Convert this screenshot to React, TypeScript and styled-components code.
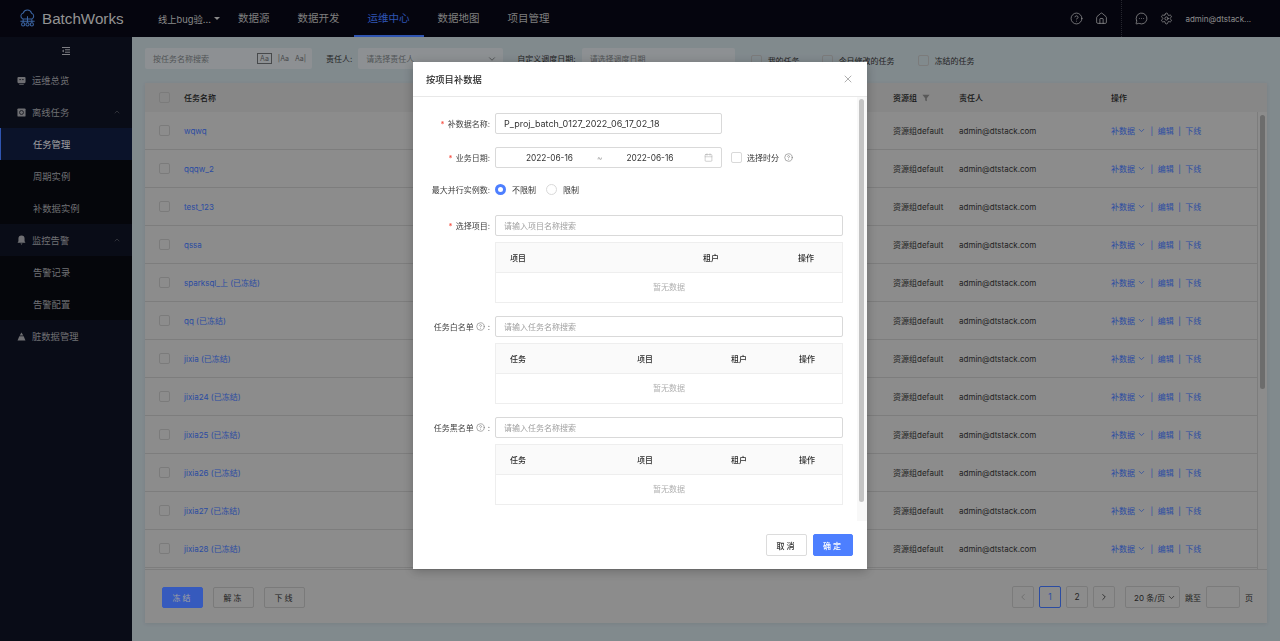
import React from 'react';
import styled, { createGlobalStyle } from 'styled-components';
import { ChevronDown, ChevronLeft, ChevronRight, ChevronUp, CircleHelp, Calendar, House, MessageCircleMore, Settings, X } from 'lucide-react';

const fontStack = `Inter, "Noto Sans CJK SC", sans-serif`;

const GlobalStyle = createGlobalStyle`
    * {
        box-sizing: border-box;
    }
    html, body {
        margin: 0;
        height: 100%;
        overflow: hidden;
        font-family: ${fontStack};
        font-size: 8px;
    }
`;

const LogoIcon = () => (
    <svg width='19' height='19' viewBox='0 0 24 24' fill='none' stroke='#4f86d8' strokeWidth='1.3'>
        <path d='M6 12.5a4 4 0 0 1 .6-7.5 5.6 5.6 0 0 1 10.6 0.4 3.8 3.8 0 0 1 .4 7.1z' />
        <path d='M3 15.5h18M6.5 13v4M12 9v8M17.5 13v4' />
        <circle cx='6.5' cy='19.5' r='2' />
        <circle cx='12' cy='19.5' r='2' />
        <circle cx='17.5' cy='19.5' r='2' />
    </svg>
);

const MenuToggleIcon = () => (
    <svg width='10' height='10' viewBox='0 0 10 10' fill='none' stroke='#a9aab0' strokeWidth='1'>
        <path d='M1 1.5h8M4 3.8h5M4 6.2h5M1 8.5h8' />
        <path d='M2.8 3.4 1 5l1.8 1.6z' fill='#a9aab0' stroke='none' />
    </svg>
);

const OverviewIcon = () => (
    <svg width='9' height='9' viewBox='0 0 10 10'>
        <rect x='0.5' y='1' width='9' height='7' rx='1.2' fill='#94959a' />
        <path d='M2.5 9.4h5' stroke='#94959a' strokeWidth='0.8' />
        <path d='M2.5 4h2M5.5 4h2' stroke='#1a1c28' strokeWidth='0.9' />
    </svg>
);

const OfflineIcon = () => (
    <svg width='9' height='9' viewBox='0 0 10 10'>
        <rect x='0.5' y='0.5' width='9' height='9' rx='1' fill='#94959a' />
        <circle cx='5' cy='5' r='2.2' fill='none' stroke='#1a1c28' strokeWidth='0.9' />
    </svg>
);

const BellIcon = () => (
    <svg width='9' height='10' viewBox='0 0 10 11' fill='#94959a'>
        <path d='M5 0.5a3.4 3.4 0 0 0-3.4 3.4V7L.6 8.6h8.8L8.4 7V3.9A3.4 3.4 0 0 0 5 .5z' />
        <path d='M3.8 9.4h2.4L5 10.8z' />
    </svg>
);

const DirtyIcon = () => (
    <svg width='9' height='9' viewBox='0 0 10 10' fill='#94959a'>
        <path d='M5 0.5 7 4H3z' />
        <path d='M2.6 4.6h4.8L9.4 9.5H.6z' />
    </svg>
);

const FilterIcon = () => (
    <svg width='8' height='8' viewBox='0 0 10 10' fill='#777'>
        <path d='M.5 1h9L6 5.4V9L4 8V5.4z' />
    </svg>
);

const HelpIcon = () => <CircleHelp size={9} strokeWidth={1.6} />;

const Header = styled.header`
    flex: none;
    height: 37px;
    display: flex;
    align-items: stretch;
    background: #070713;
    color: #b8b8b8;
`;

const Brand = styled.div`
    display: flex;
    align-items: center;
    width: 158px;
    padding-left: 18px;
    gap: 5px;
    font-family: "Liberation Sans", sans-serif;
    font-size: 15.2px;
    color: #c4c4c4;
`;

const ProjectPicker = styled.div`
    display: flex;
    align-items: center;
    width: 66px;
    gap: 3px;
    font-size: 9.3px;
`;

const Caret = styled.span`
    width: 0;
    height: 0;
    border-left: 3px solid transparent;
    border-right: 3px solid transparent;
    border-top: 3.5px solid #b8b8b8;
`;

const NavItem = styled.div<{ $active?: boolean }>`
    display: flex;
    align-items: center;
    padding: 0 14px;
    font-size: 10.5px;
    color: ${p => (p.$active ? '#3f71eb' : '#a8a8a8')};
    border-bottom: 2px solid ${p => (p.$active ? '#3f71eb' : 'transparent')};
`;

const HeaderRight = styled.div`
    margin-left: auto;
    display: flex;
    align-items: center;
    padding-right: 29px;
    color: #d0d0d0;
`;

const IconGroup = styled.div`
    display: flex;
    align-items: center;
    gap: 12px;
    padding-right: 13px;
`;

const UserGroup = styled(IconGroup)`
    height: 100%;
    padding: 0 0 0 13px;
    border-left: 1px dotted #33343f;
`;

const UserName = styled.span`
    font-size: 8px;
    color: #bdbdbd;
`;

const Shell = styled.div`
    width: 1280px;
    height: 641px;
    display: flex;
    flex-direction: column;
    overflow: hidden;
`;

const Body = styled.div`
    flex: 1;
    display: flex;
    min-height: 0;
`;

const Sidebar = styled.aside`
    flex: none;
    width: 132px;
    background: #0d101f;
    color: #94959a;
    font-size: 9.3px;
`;

const ToggleRow = styled.div`
    height: 27px;
    display: flex;
    align-items: center;
    justify-content: center;
`;

const MenuItem = styled.div`
    height: 32px;
    display: flex;
    align-items: center;
    padding-left: 17px;
    gap: 6px;
`;

const ItemChevron = styled.span`
    margin-left: auto;
    padding-right: 11px;
    display: flex;
    opacity: 0.55;
`;

const SubMenu = styled.div`
    background: #07080f;
`;

const SubItem = styled.div<{ $active?: boolean }>`
    height: 32px;
    display: flex;
    align-items: center;
    padding-left: ${p => (p.$active ? 32 : 33)}px;
    color: ${p => (p.$active ? '#d8d8d8' : '#94959a')};
    background: ${p => (p.$active ? '#0f1a38' : 'transparent')};
    border-left: ${p => (p.$active ? '1px solid #3f71eb' : 'none')};
`;

const Main = styled.main`
    flex: 1;
    min-width: 0;
    background: #adb8bd;
    padding: 11px 13px 18px;
    display: flex;
    flex-direction: column;
    color: #2e2e2e;
`;

const FilterBar = styled.div`
    flex: none;
    height: 21px;
    display: flex;
    align-items: center;
    margin-bottom: 14px;
    font-size: 8px;
`;

const FilterInput = styled.div<{ $width: number }>`
    width: ${p => p.$width}px;
    height: 21px;
    flex: none;
    display: flex;
    align-items: center;
    padding: 0 6px 0 8px;
    background: #bcc1c4;
    border-radius: 2px;
    color: #6c7073;
`;

const MatchIcons = styled.span`
    margin-left: auto;
    display: flex;
    align-items: center;
    gap: 6px;
    font-size: 7px;
    color: #5f6264;
`;

const MatchBox = styled.span`
    border: 0.5px solid #5f6264;
    padding: 0 2px;
`;

const FilterLabel = styled.span<{ $left: number; $right: number }>`
    margin: 0 ${p => p.$right}px 0 ${p => p.$left}px;
    white-space: nowrap;
`;

const Box = styled.span<{ $dark?: boolean }>`
    flex: none;
    width: 11px;
    height: 11px;
    border: 1px solid ${p => (p.$dark ? '#a5a5a5' : '#d9d9d9')};
    border-radius: 2px;
`;

const FilterCheck = styled.span<{ $left: number }>`
    display: flex;
    align-items: center;
    gap: 6px;
    margin: 3px 0 0 ${p => p.$left}px;
    white-space: nowrap;
`;

const Panel = styled.section`
    flex: 1;
    min-height: 0;
    display: flex;
    flex-direction: column;
    background: #bbb;
    box-shadow: 0 1px 4px rgba(0, 0, 0, 0.08);
`;

const Columns = styled.div`
    flex: none;
    display: grid;
    grid-template-columns: 39px 709px 66px 152px 1fr;
    align-items: center;
`;

const HeadRow = styled(Columns)`
    height: 29px;
    background: #b4b4b4;
    font-weight: 500;
    color: #222;
`;

const HeadCheck = styled.span`
    padding-left: 14px;
    display: flex;
`;

const ResourceHead = styled.span`
    display: flex;
    align-items: center;
    gap: 5px;
`;

const TableBody = styled.div`
    flex: 1;
    min-height: 0;
    display: flex;
    overflow: hidden;
`;

const RowList = styled.div`
    flex: 1;
    min-width: 0;
`;

const TableRow = styled(Columns)`
    height: 38px;
    border-bottom: 1px solid #a7a7a7;
`;

const NameLink = styled.a`
    color: #3a66d8;
`;

const ActionCell = styled.div`
    display: flex;
    align-items: center;
    color: #3a66d8;
`;

const Divider = styled.span`
    margin: 0 4.5px;
`;

const ScrollTrack = styled.div`
    flex: none;
    width: 10px;
    border-left: 1px solid #a7a7a7;
    padding: 3px 2px 0;
`;

const ScrollThumb = styled.div<{ $height: number; $color?: string }>`
    height: ${p => p.$height}px;
    border-radius: 3px;
    background: ${p => p.$color || '#909090'};
`;

const Footer = styled.div`
    flex: none;
    height: 53px;
    display: flex;
    align-items: center;
    padding: 1px 14px 0 17px;
    box-shadow: 0 -1px 0 #a7a7a7;
`;

const Btn = styled.button<{ $primary?: boolean }>`
    height: 21px;
    padding: 0;
    width: 41px;
    margin-right: 10px;
    font: inherit;
    letter-spacing: 2px;
    color: ${p => (p.$primary ? '#d5d5d5' : '#2e2e2e')};
    background: ${p => (p.$primary ? '#4978fd' : 'transparent')};
    border: 1px solid ${p => (p.$primary ? '#4978fd' : '#a3a3a3')};
    border-radius: 2px;
`;

const Pager = styled.div`
    margin-left: auto;
    display: flex;
    align-items: center;
    gap: 5px;
`;

const PageBtn = styled.span<{ $active?: boolean; $muted?: boolean }>`
    width: 22px;
    height: 22px;
    display: flex;
    align-items: center;
    justify-content: center;
    font-size: 8.4px;
    border: 1px solid ${p => (p.$active ? '#3a66d8' : '#a5a5a5')};
    border-radius: 2px;
    color: ${p => (p.$active ? '#3a66d8' : p.$muted ? '#8f8f8f' : '#2e2e2e')};
`;

const PageSize = styled.span`
    width: 55px;
    height: 22px;
    margin-left: 5px;
    display: flex;
    align-items: center;
    justify-content: space-between;
    padding: 0 3px 0 8px;
    border: 1px solid #a5a5a5;
    border-radius: 2px;
    white-space: nowrap;
`;

const JumpInput = styled.span`
    width: 34px;
    height: 22px;
    border: 1px solid #a5a5a5;
    border-radius: 2px;
`;

const Overlay = styled.div`
    position: fixed;
    inset: 0;
    background: rgba(0, 0, 0, 0.25);
    display: flex;
    justify-content: center;
    align-items: flex-start;
    padding-top: 62px;
`;

const Modal = styled.div`
    width: 454px;
    height: 507px;
    display: flex;
    flex-direction: column;
    background: #fff;
    color: #333;
    box-shadow: 0 2px 10px rgba(0, 0, 0, 0.25);
`;

const ModalHead = styled.div`
    flex: none;
    height: 35px;
    display: flex;
    align-items: center;
    justify-content: space-between;
    padding: 0 13px;
    font-size: 9.3px;
    font-weight: 500;
    color: #2b2b2b;
    border-bottom: 1px solid #e8e8e8;
`;

const ModalMiddle = styled.div`
    flex: 1;
    min-height: 0;
    display: flex;
`;

const FormArea = styled.div`
    flex: 1;
    min-width: 0;
    padding: 16px 14px 0 0;
    overflow: hidden;
`;

const ModalScrollTrack = styled.div`
    flex: none;
    width: 10px;
    padding: 2px 3px 0 2px;
    background: #f8f8f8;
`;

const FormRow = styled.div<{ $gap: number; $start?: boolean }>`
    display: flex;
    align-items: ${p => (p.$start ? 'flex-start' : 'center')};
    margin-bottom: ${p => p.$gap}px;
`;

const Label = styled.div`
    flex: none;
    width: 82px;
    height: 21px;
    padding-right: 5px;
    display: flex;
    align-items: center;
    justify-content: flex-end;
    gap: 2.5px;
    white-space: nowrap;
    color: #404040;
`;

const Required = styled.span`
    color: #f5483b;
    margin-right: 1px;
`;

const Control = styled.div<{ $width?: number }>`
    width: ${p => (p.$width ? `${p.$width}px` : '100%')};
    flex: ${p => (p.$width ? 'none' : '1')};
    min-width: 0;
`;

const TextInput = styled.div<{ $placeholder?: boolean }>`
    height: 21px;
    display: flex;
    align-items: center;
    padding: 0 8px;
    border: 1px solid #d9d9d9;
    border-radius: 2px;
    font-size: ${p => (p.$placeholder ? 8 : 9)}px;
    color: ${p => (p.$placeholder ? '#a0a0a0' : '#333')};
    white-space: nowrap;
`;

const DateRange = styled(TextInput)`
    padding: 0 8px 0 30px;
    font-size: 8.3px;
    color: #a9a9a9;
`;

const DateValue = styled.span`
    color: #333;
`;

const DateTilde = styled.span`
    margin: 0 24px;
`;

const DateIcon = styled.span`
    margin-left: auto;
    display: flex;
`;

const SideCheck = styled.div`
    margin-left: 9px;
    display: flex;
    align-items: center;
    gap: 5px;
`;

const HelpMark = styled.span`
    display: flex;
    color: #777;
`;

const RadioRow = styled.div`
    height: 21px;
    display: flex;
    align-items: center;
`;

const Radio = styled.span<{ $on?: boolean }>`
    width: 11px;
    height: 11px;
    flex: none;
    border-radius: 50%;
    background: #fff;
    border: ${p => (p.$on ? '3px solid #4d7fff' : '1px solid #d9d9d9')};
    box-shadow: ${p => (p.$on ? 'inset 0 0 0 1px #fff' : 'none')};
`;

const RadioText = styled.span`
    margin: 0 10px 0 6px;
`;

const MiniTable = styled.div`
    margin-top: 6px;
    border: 1px solid #eeeeee;
`;

const MiniHead = styled.div<{ $cols: string }>`
    height: 30px;
    padding: 0 0 1px 14px;
    display: grid;
    grid-template-columns: ${p => p.$cols};
    align-items: center;
    background: #fafafa;
    border-bottom: 1px solid #eeeeee;
    font-weight: 500;
    color: #2b2b2b;
`;

const EmptyRow = styled.div`
    height: 29px;
    padding-bottom: 2px;
    display: flex;
    align-items: center;
    justify-content: center;
    color: #b0b0b0;
`;

const ModalFoot = styled.div`
    flex: none;
    height: 48px;
    display: flex;
    align-items: center;
    justify-content: flex-end;
    gap: 6px;
    padding: 0 14px 0 0;
`;

const ModalBtn = styled.button<{ $primary?: boolean }>`
    width: ${p => (p.$primary ? 40 : 41)}px;
    height: 22px;
    padding: 0;
    font: inherit;
    font-weight: 500;
    letter-spacing: 2px;
    border-radius: 2px;
    color: ${p => (p.$primary ? '#fff' : '#333')};
    background: ${p => (p.$primary ? '#4d7fff' : '#fff')};
    border: 1px solid ${p => (p.$primary ? '#4d7fff' : '#dcdcdc')};
`;

const rows = [
    'wqwq',
    'qqqw_2',
    'test_123',
    'qssa',
    'sparksql_上 (已冻结)',
    'qq (已冻结)',
    'jixia (已冻结)',
    'jixia24 (已冻结)',
    'jixia25 (已冻结)',
    'jixia26 (已冻结)',
    'jixia27 (已冻结)',
    'jixia28 (已冻结)',
];

const taskCols = '127px 94px 68px 1fr';

const App = () => {
    return (
        <Shell>
            <GlobalStyle />
            <Header>
                <Brand>
                    <LogoIcon />
                    <span>BatchWorks</span>
                </Brand>
                <ProjectPicker>
                    <span>线上bug验...</span>
                    <Caret />
                </ProjectPicker>
                <NavItem>数据源</NavItem>
                <NavItem>数据开发</NavItem>
                <NavItem $active>运维中心</NavItem>
                <NavItem>数据地图</NavItem>
                <NavItem>项目管理</NavItem>
                <HeaderRight>
                    <IconGroup>
                        <CircleHelp size={13} strokeWidth={1.3} />
                        <House size={13} strokeWidth={1.3} />
                    </IconGroup>
                    <UserGroup>
                        <MessageCircleMore size={13} strokeWidth={1.3} />
                        <Settings size={13} strokeWidth={1.3} />
                        <UserName>admin@dtstack...</UserName>
                    </UserGroup>
                </HeaderRight>
            </Header>
            <Body>
                <Sidebar>
                    <ToggleRow>
                        <MenuToggleIcon />
                    </ToggleRow>
                    <MenuItem>
                        <OverviewIcon />
                        运维总览
                    </MenuItem>
                    <MenuItem>
                        <OfflineIcon />
                        离线任务
                        <ItemChevron>
                            <ChevronUp size={8} />
                        </ItemChevron>
                    </MenuItem>
                    <SubMenu>
                        <SubItem $active>任务管理</SubItem>
                        <SubItem>周期实例</SubItem>
                        <SubItem>补数据实例</SubItem>
                    </SubMenu>
                    <MenuItem>
                        <BellIcon />
                        监控告警
                        <ItemChevron>
                            <ChevronUp size={8} />
                        </ItemChevron>
                    </MenuItem>
                    <SubMenu>
                        <SubItem>告警记录</SubItem>
                        <SubItem>告警配置</SubItem>
                    </SubMenu>
                    <MenuItem>
                        <DirtyIcon />
                        脏数据管理
                    </MenuItem>
                </Sidebar>
                <Main>
                    <FilterBar>
                        <FilterInput $width={167}>
                            按任务名称搜索
                            <MatchIcons>
                                <MatchBox>Aa</MatchBox>
                                <span>|Aa</span>
                                <span>Aa|</span>
                            </MatchIcons>
                        </FilterInput>
                        <FilterLabel $left={14} $right={6}>责任人:</FilterLabel>
                        <FilterInput $width={145}>
                            请选择责任人
                            <MatchIcons>
                                <ChevronDown size={10} />
                            </MatchIcons>
                        </FilterInput>
                        <FilterLabel $left={14} $right={6}>自定义调度日期:</FilterLabel>
                        <FilterInput $width={153}>请选择调度日期</FilterInput>
                        <FilterCheck $left={16}><Box $dark />我的任务</FilterCheck>
                        <FilterCheck $left={22}><Box $dark />今日修改的任务</FilterCheck>
                        <FilterCheck $left={23}><Box $dark />冻结的任务</FilterCheck>
                    </FilterBar>
                    <Panel>
                        <HeadRow>
                            <HeadCheck><Box $dark /></HeadCheck>
                            <span>任务名称</span>
                            <ResourceHead>资源组<FilterIcon /></ResourceHead>
                            <span>责任人</span>
                            <span>操作</span>
                        </HeadRow>
                        <TableBody>
                            <RowList>
                                {rows.map(name => (
                                    <TableRow key={name}>
                                        <HeadCheck><Box $dark /></HeadCheck>
                                        <NameLink>{name}</NameLink>
                                        <span>资源组default</span>
                                        <span>admin@dtstack.com</span>
                                        <ActionCell>
                                            补数据<ChevronDown size={9} style={{ marginLeft: 2 }} />
                                            <Divider>|</Divider>编辑<Divider>|</Divider>下线
                                        </ActionCell>
                                    </TableRow>
                                ))}
                            </RowList>
                            <ScrollTrack>
                                <ScrollThumb $height={274} />
                            </ScrollTrack>
                        </TableBody>
                        <Footer>
                            <Btn $primary>冻结</Btn>
                            <Btn>解冻</Btn>
                            <Btn>下线</Btn>
                            <Pager>
                                <PageBtn $muted><ChevronLeft size={10} /></PageBtn>
                                <PageBtn $active>1</PageBtn>
                                <PageBtn>2</PageBtn>
                                <PageBtn><ChevronRight size={10} /></PageBtn>
                                <PageSize>20 条/页<ChevronDown size={9} /></PageSize>
                                <span>跳至</span>
                                <JumpInput />
                                <span>页</span>
                            </Pager>
                        </Footer>
                    </Panel>
                </Main>
            </Body>
            <Overlay>
                <Modal>
                    <ModalHead>
                        按项目补数据
                        <X size={12} color='#8c8c8c' strokeWidth={1.4} />
                    </ModalHead>
                    <ModalMiddle>
                        <FormArea>
                            <FormRow $gap={13}>
                                <Label><span><Required>*</Required> 补数据名称:</span></Label>
                                <Control $width={227}>
                                    <TextInput>P_proj_batch_0127_2022_06_17_02_18</TextInput>
                                </Control>
                            </FormRow>
                            <FormRow $gap={11}>
                                <Label><span><Required>*</Required> 业务日期:</span></Label>
                                <Control $width={227}>
                                    <DateRange>
                                        <DateValue>2022-06-16</DateValue>
                                        <DateTilde>~</DateTilde>
                                        <DateValue>2022-06-16</DateValue>
                                        <DateIcon><Calendar size={9} strokeWidth={1.4} /></DateIcon>
                                    </DateRange>
                                </Control>
                                <SideCheck>
                                    <Box />
                                    选择时分
                                    <HelpMark><HelpIcon /></HelpMark>
                                </SideCheck>
                            </FormRow>
                            <FormRow $gap={15}>
                                <Label>最大并行实例数:</Label>
                                <Control>
                                    <RadioRow>
                                        <Radio $on />
                                        <RadioText>不限制</RadioText>
                                        <Radio />
                                        <RadioText>限制</RadioText>
                                    </RadioRow>
                                </Control>
                            </FormRow>
                            <FormRow $gap={13} $start>
                                <Label><span><Required>*</Required> 选择项目:</span></Label>
                                <Control>
                                    <TextInput $placeholder>请输入项目名称搜索</TextInput>
                                    <MiniTable>
                                        <MiniHead $cols='193px 95px 1fr'>
                                            <span>项目</span><span>租户</span><span>操作</span>
                                        </MiniHead>
                                        <EmptyRow>暂无数据</EmptyRow>
                                    </MiniTable>
                                </Control>
                            </FormRow>
                            <FormRow $gap={13} $start>
                                <Label>任务白名单<HelpMark><HelpIcon /></HelpMark><span>:</span></Label>
                                <Control>
                                    <TextInput $placeholder>请输入任务名称搜索</TextInput>
                                    <MiniTable>
                                        <MiniHead $cols={taskCols}>
                                            <span>任务</span><span>项目</span><span>租户</span><span>操作</span>
                                        </MiniHead>
                                        <EmptyRow>暂无数据</EmptyRow>
                                    </MiniTable>
                                </Control>
                            </FormRow>
                            <FormRow $gap={14} $start>
                                <Label>任务黑名单<HelpMark><HelpIcon /></HelpMark><span>:</span></Label>
                                <Control>
                                    <TextInput $placeholder>请输入任务名称搜索</TextInput>
                                    <MiniTable>
                                        <MiniHead $cols={taskCols}>
                                            <span>任务</span><span>项目</span><span>租户</span><span>操作</span>
                                        </MiniHead>
                                        <EmptyRow>暂无数据</EmptyRow>
                                    </MiniTable>
                                </Control>
                            </FormRow>
                        </FormArea>
                        <ModalScrollTrack>
                            <ScrollThumb $height={403} $color='#c4c4c4' />
                        </ModalScrollTrack>
                    </ModalMiddle>
                    <ModalFoot>
                        <ModalBtn>取消</ModalBtn>
                        <ModalBtn $primary>确定</ModalBtn>
                    </ModalFoot>
                </Modal>
            </Overlay>
        </Shell>
    );
};

export default App;
